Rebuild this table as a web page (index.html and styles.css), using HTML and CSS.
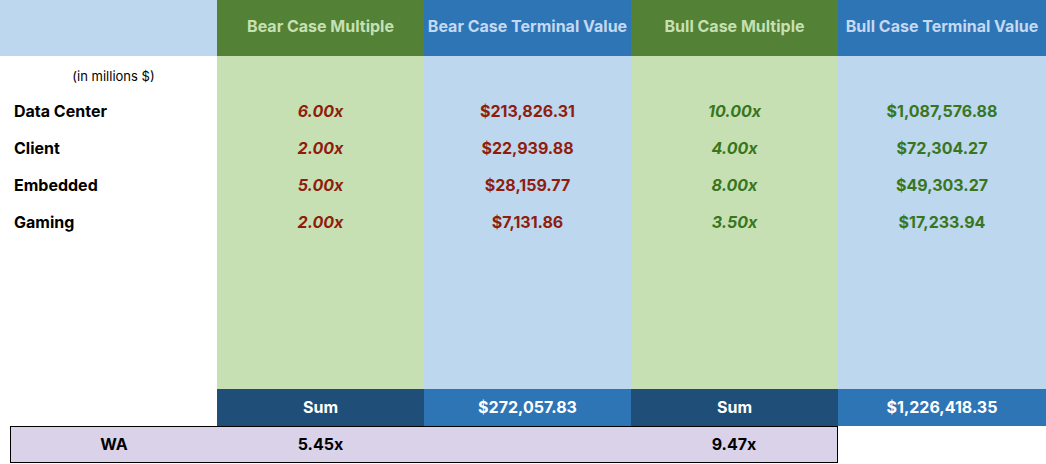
FILE: index.html
```html
<!DOCTYPE html>
<html>
<head>
<meta charset="utf-8">
<link rel="stylesheet" href="styles.css">
</head>
<body>
<div class="sheet">
  <div class="grid">
    <div class="cell hdr-blank"></div>
    <div class="cell hdr hdr-green">Bear Case Multiple</div>
    <div class="cell hdr hdr-blue">Bear Case Terminal Value</div>
    <div class="cell hdr hdr-green">Bull Case Multiple</div>
    <div class="cell hdr hdr-blue">Bull Case Terminal Value</div>

    <div class="cell note">(in millions $)</div>
    <div class="cell lg"></div><div class="cell lb"></div><div class="cell lg"></div><div class="cell lb"></div>

    <div class="cell label">Data Center</div>
    <div class="cell lg bear mult">6.00x</div><div class="cell lb bear">$213,826.31</div><div class="cell lg bull mult">10.00x</div><div class="cell lb bull">$1,087,576.88</div>

    <div class="cell label">Client</div>
    <div class="cell lg bear mult">2.00x</div><div class="cell lb bear">$22,939.88</div><div class="cell lg bull mult">4.00x</div><div class="cell lb bull">$72,304.27</div>

    <div class="cell label">Embedded</div>
    <div class="cell lg bear mult">5.00x</div><div class="cell lb bear">$28,159.77</div><div class="cell lg bull mult">8.00x</div><div class="cell lb bull">$49,303.27</div>

    <div class="cell label">Gaming</div>
    <div class="cell lg bear mult">2.00x</div><div class="cell lb bear">$7,131.86</div><div class="cell lg bull mult">3.50x</div><div class="cell lb bull">$17,233.94</div>

    <div class="cell"></div><div class="cell lg"></div><div class="cell lb"></div><div class="cell lg"></div><div class="cell lb"></div>
    <div class="cell"></div><div class="cell lg"></div><div class="cell lb"></div><div class="cell lg"></div><div class="cell lb"></div>
    <div class="cell"></div><div class="cell lg"></div><div class="cell lb"></div><div class="cell lg"></div><div class="cell lb"></div>
    <div class="cell"></div><div class="cell lg"></div><div class="cell lb"></div><div class="cell lg"></div><div class="cell lb"></div>

    <div class="cell"></div>
    <div class="cell sum-dark">Sum</div>
    <div class="cell sum-blue">$272,057.83</div>
    <div class="cell sum-dark">Sum</div>
    <div class="cell sum-blue">$1,226,418.35</div>
  </div>
  <div class="wa">
    <div class="cell wa-cell">WA</div>
    <div class="cell wa-cell">5.45x</div>
    <div class="cell wa-cell"></div>
    <div class="cell wa-cell">9.47x</div>
  </div>
</div>
</body>
</html>
```
FILE: styles.css
```css
html, body {
  margin: 0;
  padding: 0;
  background: #ffffff;
}
body {
  font-family: Inter, "Liberation Sans", sans-serif;
  font-size: 16px;
  font-weight: 700;
  color: #000000;
}
.sheet {
  width: 1046px;
}
.grid {
  display: grid;
  grid-template-columns: 217px 207px 207px 207px 208px;
  grid-template-rows: 56px repeat(10, 37px);
}
.cell {
  display: flex;
  align-items: center;
  justify-content: center;
  white-space: nowrap;
  padding-bottom: 2px;
}
.hdr-blank {
  background: #bdd7ee;
}
.hdr {
  padding-bottom: 4px;
}
.hdr-green {
  background: #538135;
  color: #c6e0b4;
}
.hdr-blue {
  background: #2e75b6;
  color: #c4d9f1;
}
.lg {
  background: #c6e0b4;
}
.lb {
  background: #bdd7ee;
}
.note {
  font-weight: 400;
  font-size: 13px;
  padding-left: 10px;
  padding-bottom: 0;
  padding-top: 2px;
}
.label {
  justify-content: flex-start;
  padding-left: 14px;
}
.bear {
  color: #8f1d0e;
}
.bull {
  color: #38761d;
}
.mult {
  font-style: italic;
}
.sum-dark {
  background: #1f4e79;
  color: #ffffff;
}
.sum-blue {
  background: #2e75b6;
  color: #ffffff;
}
.wa {
  display: grid;
  grid-template-columns: 206px 207px 207px 206px;
  height: 35px;
  margin-left: 10px;
  width: 826px;
  border: 1px solid #000000;
  background: #d9d2e9;
}
```
